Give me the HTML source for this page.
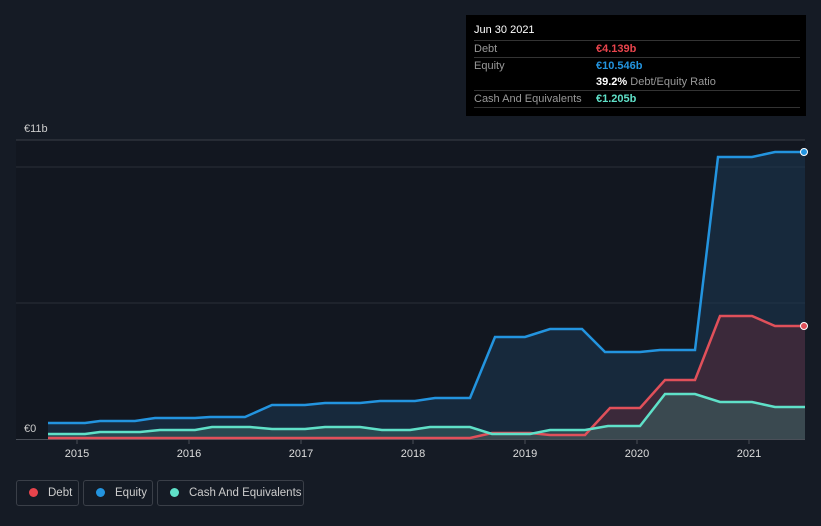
<!DOCTYPE html><html><head><style>
body{margin:0;width:821px;height:526px;background:#151b25;font-family:"Liberation Sans",sans-serif;overflow:hidden;position:relative}
.tt{position:absolute;left:466px;top:15px;width:340px;height:101px;background:#000;font-size:11px;color:#999}
.tt .r{position:absolute;left:8px;right:6px;border-top:1px solid #333;height:17px;line-height:17px}
.lg{position:absolute;top:480px;height:26px;border:1px solid #3a3f48;border-radius:3px;color:#ccc;font-size:11.5px;line-height:24px;box-sizing:border-box;white-space:nowrap;overflow:hidden}
.lg i{display:inline-block;width:9px;height:9px;border-radius:50%;margin:0 10px 0 12px;vertical-align:-1px}
</style></head><body>
<svg width="821" height="526" style="position:absolute;left:0;top:0">
<rect x="16" y="140" width="789" height="299" fill="#121720"/>
<line x1="16" y1="140" x2="805" y2="140" stroke="#3a3f48"/>
<line x1="16" y1="167" x2="805" y2="167" stroke="#2a2f38"/>
<line x1="16" y1="303" x2="805" y2="303" stroke="#2a2f38"/>
<line x1="16" y1="439.5" x2="805" y2="439.5" stroke="#4a4f58"/>
<g fill="#ccc" font-size="11"><text x="24" y="132">€11b</text><text x="24" y="432">€0</text></g>
<g fill="#ddd" font-size="11" text-anchor="middle"><text x="77" y="457">2015</text><text x="189" y="457">2016</text><text x="301" y="457">2017</text><text x="413" y="457">2018</text><text x="525" y="457">2019</text><text x="637" y="457">2020</text><text x="749" y="457">2021</text></g>
<g stroke="#4a4f58"><line x1="77" y1="440" x2="77" y2="444"/><line x1="189" y1="440" x2="189" y2="444"/><line x1="301" y1="440" x2="301" y2="444"/><line x1="413" y1="440" x2="413" y2="444"/><line x1="525" y1="440" x2="525" y2="444"/><line x1="637" y1="440" x2="637" y2="444"/><line x1="749" y1="440" x2="749" y2="444"/></g>
<path d="M48,423 85,423 100,421 135,421 155,418 195,418 210,417 245,417 272,405 305,405 325,403 360,403 380,401 415,401 435,398 470,398 495,337 525,337 550,329 582,329 605,352 640,352 660,350 695,350 718,157 752,157 775,152 805,152 805,439 48,439Z" fill="#1a3550" opacity=".6"/>
<path d="M48,438 470,438 492,433 530,433 550,435 585,435 610,408 640,408 665,380 695,380 720,316 752,316 775,326 805,326 805,439 48,439Z" fill="#5a2a38" opacity=".55"/>
<path d="M48,434 85,434 100,432 140,432 160,430 195,430 212,427 250,427 272,429 305,429 325,427 360,427 382,430 410,430 430,427 470,427 492,434 530,434 550,430 585,430 608,426 640,426 665,394 695,394 720,402 752,402 775,407 805,407 805,439 48,439Z" fill="#3a6a66" opacity=".5"/>
<path d="M48,423 85,423 100,421 135,421 155,418 195,418 210,417 245,417 272,405 305,405 325,403 360,403 380,401 415,401 435,398 470,398 495,337 525,337 550,329 582,329 605,352 640,352 660,350 695,350 718,157 752,157 775,152 805,152" fill="none" stroke="#2394df" stroke-width="2.5"/>
<path d="M48,438 470,438 492,433 530,433 550,435 585,435 610,408 640,408 665,380 695,380 720,316 752,316 775,326 805,326" fill="none" stroke="#e0505a" stroke-width="2.5"/>
<path d="M48,434 85,434 100,432 140,432 160,430 195,430 212,427 250,427 272,429 305,429 325,427 360,427 382,430 410,430 430,427 470,427 492,434 530,434 550,430 585,430 608,426 640,426 665,394 695,394 720,402 752,402 775,407 805,407" fill="none" stroke="#5fe0c8" stroke-width="2.5"/>
<circle cx="804" cy="152" r="3.5" fill="#2394df" stroke="#fff"/><circle cx="804" cy="326" r="3.5" fill="#e0505a" stroke="#fff"/>
</svg>
<div class="tt">
<div style="position:absolute;left:8px;top:9px;color:#fff;font-size:11px">Jun 30 2021</div>
<div class="r" style="top:25px">Debt<span style="position:absolute;left:122px;color:#e8444c;font-weight:bold">€4.139b</span></div>
<div class="r" style="top:42px">Equity<span style="position:absolute;left:122px;color:#2394df;font-weight:bold">€10.546b</span></div>
<div class="r" style="top:59px;border:0"><span style="position:absolute;left:122px"><b style="color:#fff">39.2%</b> Debt/Equity Ratio</span></div>
<div class="r" style="top:75px">Cash And Equivalents<span style="position:absolute;left:122px;color:#5fe0c8;font-weight:bold">€1.205b</span></div>
<div class="r" style="top:92px;height:0"></div>
</div>
<div class="lg" style="left:16px;width:63px"><i style="background:#e8444c"></i>Debt</div>
<div class="lg" style="left:83px;width:70px"><i style="background:#2394df"></i>Equity</div>
<div class="lg" style="left:157px;width:147px"><i style="background:#5fe0c8"></i>Cash And Equivalents</div>
</body></html>
